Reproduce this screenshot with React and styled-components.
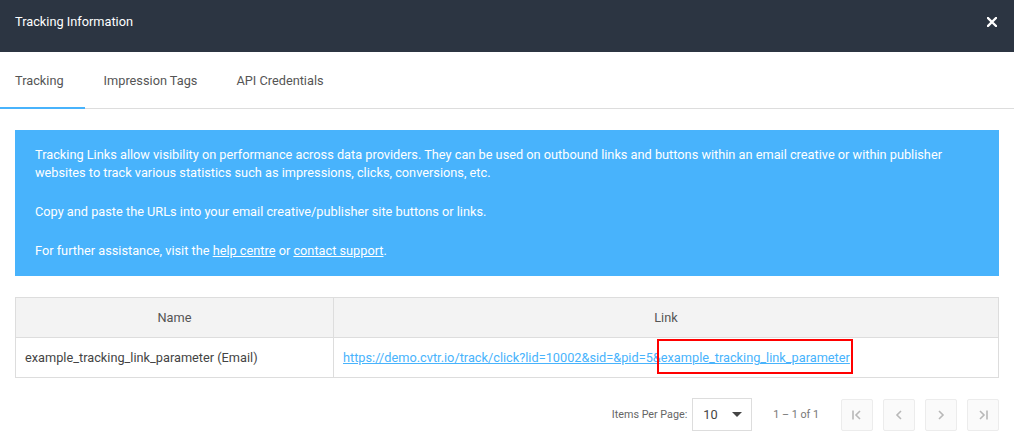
import styled, { createGlobalStyle } from 'styled-components';

const GlobalStyle = createGlobalStyle`
  html, body {
    margin: 0;
    padding: 0;
    background: #fff;
  }
  body {
    font-family: Roboto, "Liberation Sans", sans-serif;
    color: #444;
  }
`;

const Modal = styled.div`
  width: 1014px;
  height: 444px;
  background: #fff;
  overflow: hidden;
`;

const Header = styled.div`
  height: 52px;
  background: #2c3542;
  display: flex;
  align-items: flex-start;
  justify-content: space-between;
  padding: 14px 17px 0 15px;
  box-sizing: border-box;
`;

const HeaderTitle = styled.div`
  color: #fff;
  font-size: 12.75px;
  line-height: 16px;
`;

const CloseButton = styled.button`
  background: transparent;
  border: none;
  padding: 0;
  margin-top: 3px;
  width: 10px;
  height: 10px;
  display: flex;
  align-items: center;
  justify-content: center;
  cursor: pointer;
`;

const TabBar = styled.div`
  display: flex;
  height: 57px;
  border-bottom: 1px solid #ddd;
  box-sizing: border-box;
`;

const Tab = styled.div`
  display: flex;
  align-items: center;
  padding: ${p => (p.first ? '2px 21px 0 15px' : '2px 20px 0')};
  margin-left: ${p => (p.first ? '0' : '-1px')};
  font-size: 12.75px;
  color: #555;
  border-bottom: 2px solid ${p => (p.active ? '#48b3fc' : 'transparent')};
  margin-bottom: -1px;
`;

const Body = styled.div`
  padding: 21px 15px 0;
`;

const InfoBox = styled.div`
  background: #48b3fc;
  color: #fff;
  padding: 16px 20px;
  font-size: 12.75px;
  line-height: 18px;

  p {
    margin: 0 0 21px;
  }
  p:last-child {
    margin-bottom: 0;
  }
  a {
    color: #fff;
    text-decoration: underline;
  }
`;

const Table = styled.table`
  width: 100%;
  margin-top: 21px;
  border-collapse: collapse;
  font-size: 12.75px;
  table-layout: fixed;
`;

const Th = styled.th`
  height: 39px;
  padding: 0;
  background: #f3f3f3;
  border: 1px solid #ddd;
  font-weight: normal;
  color: #555;
  text-align: center;
  width: ${p => p.width || 'auto'};
`;

const Td = styled.td`
  height: 39px;
  border: 1px solid #ddd;
  padding: 0 9px;
  color: #444;
  white-space: nowrap;
`;

const LinkText = styled.a`
  color: #48b3fc;
  text-decoration: underline;
`;

const Highlight = styled.span`
  position: relative;

  &::after {
    content: '';
    position: absolute;
    left: -4px;
    right: -3px;
    top: -11px;
    bottom: -9px;
    border: 2px solid #f00;
  }
`;

const Pager = styled.div`
  display: flex;
  align-items: center;
  justify-content: flex-end;
  margin-top: 20px;
  font-size: 10.75px;
  color: #666;
`;

const PagerLabel = styled.span`
  margin-right: 5px;
`;

const Select = styled.div`
  width: 60px;
  height: 33px;
  box-sizing: border-box;
  border: 1px solid #ddd;
  display: flex;
  align-items: center;
  justify-content: space-between;
  padding: 0 9px 0 10px;
  font-size: 12.75px;
  color: #444;
`;

const Caret = styled.span`
  width: 0;
  height: 0;
  border-left: 5px solid transparent;
  border-right: 5px solid transparent;
  border-top: 5px solid #444;
`;

const Range = styled.span`
  margin: 0 22px 0 21px;
  color: #777;
`;

const PageButtons = styled.div`
  display: flex;
  gap: 10px;
`;

const PageButton = styled.button`
  width: 32px;
  height: 32px;
  box-sizing: border-box;
  border: 1px solid #ececec;
  border-radius: 2px;
  background: #fafafa;
  display: flex;
  align-items: center;
  justify-content: center;
  padding: 0;
`;

const Chevron = ({ dir = 'left', bar }) => (
  <svg width="14" height="14" viewBox="0 0 14 14" fill="none" stroke="#b8b8b8" strokeWidth="1.6">
    {dir === 'left' ? (
      <>
        {bar && <line x1="3" y1="2.5" x2="3" y2="11.5" />}
        <polyline points={bar ? '10,3 6,7 10,11' : '9,3 5,7 9,11'} />
      </>
    ) : (
      <>
        <polyline points={bar ? '4,3 8,7 4,11' : '5,3 9,7 5,11'} />
        {bar && <line x1="11" y1="2.5" x2="11" y2="11.5" />}
      </>
    )}
  </svg>
);

export default function App() {
  return (
    <>
      <GlobalStyle />
      <Modal>
        <Header>
          <HeaderTitle>Tracking Information</HeaderTitle>
          <CloseButton aria-label="Close">
            <svg width="10" height="10" viewBox="0 0 10 10">
              <path d="M1 1 L9 9 M9 1 L1 9" stroke="#fff" strokeWidth="2.3" strokeLinecap="square" />
            </svg>
          </CloseButton>
        </Header>

        <TabBar>
          <Tab first active>Tracking</Tab>
          <Tab>Impression Tags</Tab>
          <Tab>API Credentials</Tab>
        </TabBar>

        <Body>
          <InfoBox>
            <p>
              Tracking Links allow visibility on performance across data providers. They can be used on outbound links and
              buttons within an email creative or within publisher websites to track various statistics such as impressions,
              clicks, conversions, etc.
            </p>
            <p>Copy and paste the URLs into your email creative/publisher site buttons or links.</p>
            <p>
              For further assistance, visit the <a href="#help">help centre</a> or <a href="#support">contact support</a>.
            </p>
          </InfoBox>

          <Table>
            <thead>
              <tr>
                <Th width="317px">Name</Th>
                <Th>Link</Th>
              </tr>
            </thead>
            <tbody>
              <tr>
                <Td>example_tracking_link_parameter (Email)</Td>
                <Td>
                  <LinkText href="#link">
                    https://demo.cvtr.io/track/click?lid=10002&amp;sid=&amp;pid=5&amp;
                    <Highlight>example_tracking_link_parameter</Highlight>
                  </LinkText>
                </Td>
              </tr>
            </tbody>
          </Table>

          <Pager>
            <PagerLabel>Items Per Page:</PagerLabel>
            <Select>
              10
              <Caret />
            </Select>
            <Range>1 – 1 of 1</Range>
            <PageButtons>
              <PageButton aria-label="First page"><Chevron dir="left" bar /></PageButton>
              <PageButton aria-label="Previous page"><Chevron dir="left" /></PageButton>
              <PageButton aria-label="Next page"><Chevron dir="right" /></PageButton>
              <PageButton aria-label="Last page"><Chevron dir="right" bar /></PageButton>
            </PageButtons>
          </Pager>
        </Body>
      </Modal>
    </>
  );
}
